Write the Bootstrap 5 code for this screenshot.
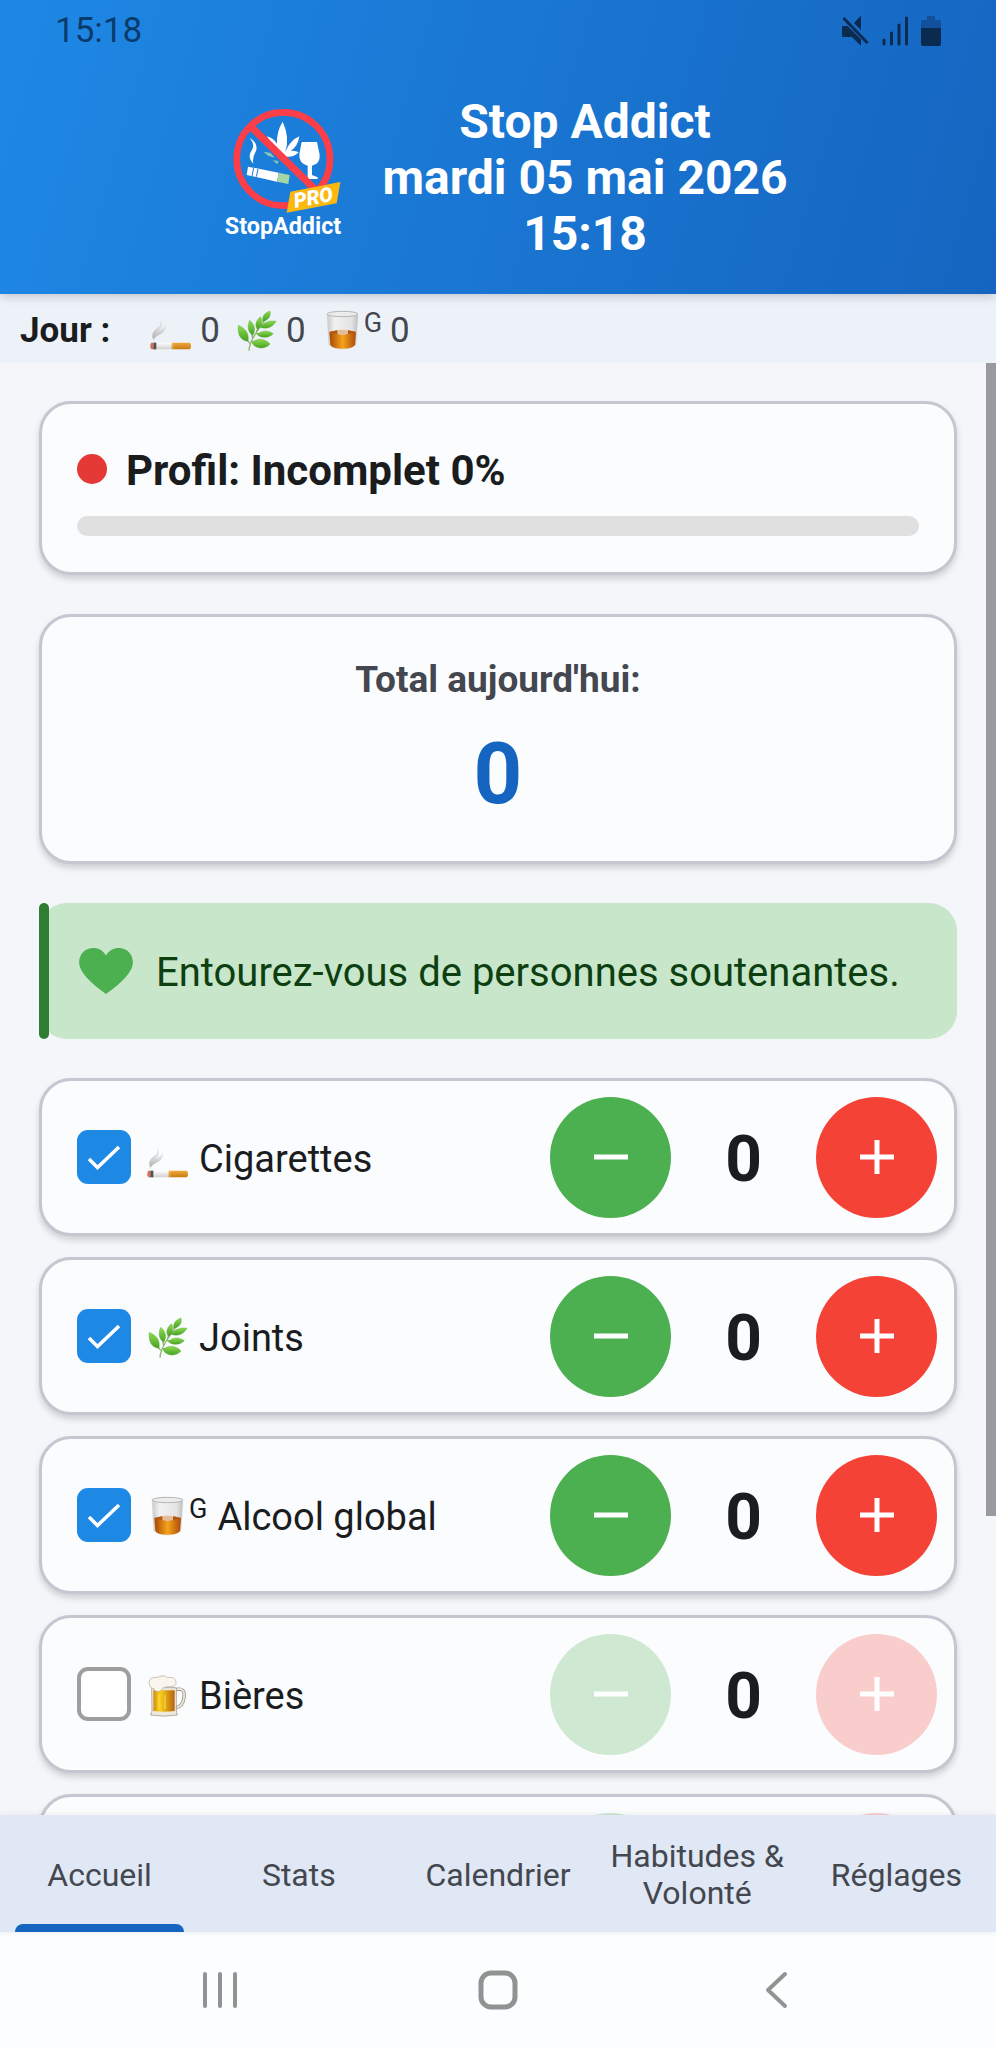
<!DOCTYPE html>
<html lang="fr">
<head>
<meta charset="utf-8">
<meta name="viewport" content="width=device-width, initial-scale=1">
<title>Stop Addict</title>
<link rel="stylesheet" href="https://cdn.jsdelivr.net/npm/bootstrap@5.3.0/dist/css/bootstrap.min.css">
<style>
  body { font-family: Roboto, "Liberation Sans", sans-serif; background: #f4f6fa; color: #1a1c1e; }
  .screen { height: 100vh; }
  .hero { background: linear-gradient(106deg, #1e88e5, #1565c0); color: #fff; padding-bottom: 32px; box-shadow: 0 2px 10px rgba(0,0,0,.2); z-index: 2; }
  .status { height: 62px; padding: 0 55px; color: rgba(0,20,45,.66); font-size: 35px; line-height: 62px; }
  .status-icons { gap: 13px; }
  .hero-title { font-size: 48px; line-height: 56px; font-weight: 700; }
  .day { background: #edf2f9; height: 69px; padding: 4px 20px 0; font-size: 35px; line-height: 40px; color: #44474f; gap: 40px; }
  .day b { color: #1a1c1e; }
  .emoji { width: 42px; height: 42px; flex: none; }
  .mini { font-size: 27px; line-height: 26px; align-self: flex-start; }
  .scroll { padding: 38px 39px 0; gap: 39px; min-height: 0; }
  .thumb { top: 0; right: 0; width: 10px; background: #9a999f; }
  .panel { background: #fafcfe; border: 3px solid #c5c6d0; border-radius: 32px; box-shadow: 0 4px 6px rgba(0,0,0,.16); flex: none; }
  .profile { padding: 40px 35px 36px; }
  .profile-head { gap: 19px; }
  .profile h2 { font-size: 42px; line-height: 46px; padding-top: 4px; font-weight: 700; }
  .dot { width: 30px; height: 30px; background: #e53935; }
  .gauge { height: 20px; border-radius: 10px; background: #e0e0e0; margin-top: 22px; }
  .total { padding: 39px 35px 37px; }
  .total-label { font-size: 37px; line-height: 48px; color: #44474f; font-weight: 700; }
  .total-value { font-size: 85px; line-height: 100px; color: #1565c0; font-weight: 700; margin-top: 20px; }
  .quote { flex: none; height: 136px; background: #c8e6c9; border-radius: 28px; padding-left: 40px; gap: 23px; font-size: 40px; line-height: 48px; color: #0d3f11; }
  .quote-text { padding-top: 4px; }
  .quote-bar { left: 0; top: 0; width: 10px; background: #2e7d32; border-radius: 5px; }
  .counter { height: 158px; padding: 0 17px 0 35px; }
  .counter label { gap: 10px; font-size: 38px; line-height: 46px; padding-top: 4px; }
  .counters { gap: 21px; }
  .counter .form-check-input { width: 54px; height: 54px; margin: 0; border: 4px solid #9e9e9e; border-radius: 11px; flex: none; margin-right: 16px; background-color: #fff; }
  .counter .form-check-input:checked { border-color: #1e88e5; background-color: #1e88e5; background-size: 46px; background-image: url("data:image/svg+xml,%3Csvg xmlns='http://www.w3.org/2000/svg' viewBox='0 0 46 46'%3E%3Cpath d='M8 25l8.500 8.500L38 13' fill='none' stroke='white' stroke-width='3.500'/%3E%3C/svg%3E"); }
  .round { width: 121px; height: 121px; padding: 0; border: 0; border-radius: 50%; display: flex; align-items: center; justify-content: center; }
  .round svg { width: 34px; height: 34px; }
  .minus { background: #4caf50; }
  .plus { background: #f44336; }
  .minus:disabled { background: #cee8d1; }
  .plus:disabled { background: #f9cdcc; }
  .count { width: 145px; font-size: 64px; line-height: 76px; padding-top: 5px; font-weight: 700; }
  .tabs { background: #dfe8f4; height: 117px; z-index: 2; box-shadow: 0 0 6px rgba(0,0,0,.08); }
  .tabs a { flex: 1 1 0; color: #44474f; font-size: 32px; line-height: 37px; padding: 3px 5px 0; }
  .tabs .tab-mark { left: 15px; right: 15px; bottom: 0; height: 8px; border-radius: 8px 8px 0 0; background: #1565c0; }
  .sysnav { background: #fcfdff; height: 116px; padding: 0 81px; }
  .sysnav button { flex: 1 1 0; border: 0; background: none; padding: 0; }
</style>
</head>
<body>
<svg class="position-absolute" width="0" height="0" aria-hidden="true">
  <defs>
    <linearGradient id="gPaper" x1="0" y1="0" x2="0" y2="1"><stop offset="0" stop-color="#fff"/><stop offset="1" stop-color="#cfcfcf"/></linearGradient>
    <linearGradient id="gFilter" x1="0" y1="0" x2="0" y2="1"><stop offset="0" stop-color="#f0a93c"/><stop offset="1" stop-color="#c57a12"/></linearGradient>
    <linearGradient id="gSmoke" x1="0" y1="1" x2="0" y2="0"><stop offset="0" stop-color="#a9a9a9"/><stop offset="1" stop-color="#ececec" stop-opacity=".5"/></linearGradient>
    <linearGradient id="gLeaf" x1="0" y1="0" x2="0" y2="1"><stop offset="0" stop-color="#8fdc50"/><stop offset="1" stop-color="#45a122"/></linearGradient>
    <linearGradient id="gGlass" x1="0" y1="0" x2="1" y2="0"><stop offset="0" stop-color="#c9c9c9"/><stop offset=".25" stop-color="#f1f1f1"/><stop offset=".8" stop-color="#e3e3e3"/><stop offset="1" stop-color="#bdbdbd"/></linearGradient>
    <linearGradient id="gDrink" x1="0" y1="0" x2="1" y2="0"><stop offset="0" stop-color="#a84706"/><stop offset=".5" stop-color="#f6a31c"/><stop offset="1" stop-color="#ad4a08"/></linearGradient>
    <linearGradient id="gBeer" x1="0" y1="0" x2="1" y2="0"><stop offset="0" stop-color="#d08a10"/><stop offset=".3" stop-color="#fbd11f"/><stop offset="1" stop-color="#b8640c"/></linearGradient>
    <symbol id="cig" viewBox="0 0 126 126">
      <path d="M10 92C0 68 14 60 24 52c8-7 8-14 7-26 8 12 7 22 0 31-8 9-20 14-21 35z" fill="url(#gSmoke)"/>
      <path d="M12 88c-2-16 6-22 18-28 10-5 15-10 17-20 3 16-3 26-14 32-9 5-17 7-21 16z" fill="url(#gSmoke)"/>
      <path d="M5 98h62v20H5q-5-10 0-20z" fill="url(#gPaper)"/>
      <path d="M4 98h6v20H4q-7-10 0-20z" fill="#d9705c"/><path d="M10 98h9v20h-9z" fill="#57514b"/>
      <path d="M65 98h55q6 10 0 20H65z" fill="url(#gFilter)"/><path d="M69 98v20" stroke="#f7c77a" stroke-width="2"/>
    </symbol>
    <symbol id="leaf" viewBox="0 0 126 126">
      <path d="M39 122C40 96 58 70 92 22M41 100Q28 86 18 64M49 84Q48 60 44 42M61 65Q70 52 68 38M70 52L105 42M60 70l35 3M46 94l38 9" fill="none" stroke="#8cb566" stroke-width="4"/>
      <g fill="url(#gLeaf)" stroke="#4d9e2c" stroke-width="1">
        <path d="M36 94C10 92 4 68 7 46c20 8 34 24 29 48z"/>
        <path d="M50 76C34 66 34 46 41 31c14 10 20 30 9 45z"/>
        <path d="M64 58C54 44 62 28 74 20c6 14 4 30-10 38z"/>
        <path d="M80 34C78 16 88 8 102 3c4 14-4 28-22 31z"/>
        <path d="M74 52c8-16 28-22 46-18-8 16-28 26-46 18z"/>
        <path d="M64 74c12-14 32-14 48-3-12 12-34 16-48 3z"/>
        <path d="M48 98c14-14 38-14 54 4-14 16-42 18-54-4z"/>
      </g>
    </symbol>
    <symbol id="glass" viewBox="0 0 126 126">
      <path d="M15 11l5 94q42 26 82 0l6-94z" fill="url(#gGlass)" stroke="#d2d2d2" stroke-width="1"/>
      <ellipse cx="61.500" cy="12" rx="46" ry="8" fill="#ececec" stroke="#b5b5b5" stroke-width="3"/>
      <path d="M22 66q40-12 80 0l-3 38q-6 12-38 12t-36-12z" fill="url(#gDrink)"/>
      <path d="M22 66q40-12 80 0-40 16-80 0z" fill="#b5590e"/>
      <path d="M46 60q16-8 32 0v12q-16 6-32 0z" fill="#f3dfc8" opacity=".75"/>
    </symbol>
    <symbol id="beer" viewBox="0 0 126 126">
      <path d="M84 45c22-8 30 2 27 22-2 22-12 30-27 32" fill="none" stroke="#8f8579" stroke-width="10"/>
      <path d="M84 45c22-8 30 2 27 22-2 22-12 30-27 32" fill="none" stroke="#e8e3da" stroke-width="6"/>
      <path d="M14 38h74v70l3 12q-40 7-80 0l4-12z" fill="#eee9df" stroke="#958a7c" stroke-width="2"/>
      <path d="M19 46h64v62q-32 5-64 0z" fill="url(#gBeer)"/>
      <path d="M35 60v42M54 60v42" stroke="#ffe04a" stroke-width="6" opacity=".5"/>
      <path d="M7 26C3 12 18 4 30 8c10-7 26-7 32 0 14-4 26 4 25 16 0 8-8 11-20 11-10 0-22 2-26 12-6 4-16 4-20-6C12 40 8 34 7 26z" fill="#faf6ee" stroke="#b0a594" stroke-width="2"/>
    </symbol>
    <symbol id="less" viewBox="0 0 34 34"><path d="M0 17h34" stroke="#fff" stroke-width="5"/></symbol>
    <symbol id="more" viewBox="0 0 34 34"><path d="M0 17h34M17 0v34" stroke="#fff" stroke-width="5"/></symbol>
  </defs>
</svg>

<div class="screen d-flex flex-column overflow-hidden">
  <header class="hero position-relative">
    <div class="status d-flex justify-content-between align-items-center">
      <span>15:18</span>
      <span class="status-icons d-flex align-items-center">
        <svg width="27" height="30" viewBox="0 0 27 30" fill="#0a2a4f"><path d="M0 10h5.500L19 23.500V29h-1l-8-8H1q-1 0-1-1zM12 7l6.500-7H19v14z"/><path d="M1.500 2L25.500 27" stroke="#0a2a4f" stroke-width="3"/></svg>
        <svg width="26" height="30" viewBox="0 0 26 30" stroke="#0a2a4f" stroke-width="3" stroke-linecap="round"><path d="M2 24v4M9.500 17v11M17 9v19M24.500 2v26" fill="none"/></svg>
        <svg width="20" height="30" viewBox="0 0 20 30"><path d="M6 0h8v4h4q2 0 2 2v7H0V6q0-2 2-2h4z" fill="#12509c"/><path d="M0 12h20v16q0 2-2 2H2q-2 0-2-2z" fill="#0a2a4f"/></svg>
      </span>
    </div>
    <div class="d-flex justify-content-center align-items-center pt-4 mt-2 gap-4">
      <svg width="150" height="166" viewBox="0 0 450 498" role="img" aria-label="StopAddict Pro">
        <g fill="#fff">
          <path d="M224 80q22 48 8 90 14-34 42-46-4 30-26 44 14-2 24 4-18 18-44 12l-42-40q-2-8-9-20 20 6 30 22-2-36 17-66z"/>
          <path d="M281 141h46l8 38q2 28-23 33v28l17 7v5h-30V212q-27-6-25-34z"/>
          <path d="M124 128q28 16 20 40-12 20-8 38-20-20-4-42 10-16-8-36z"/>
          <path d="M120 215l92 18-5 27-91-20z"/>
        </g>
        <path d="M137 219l-5 24M150 222l-5 23" stroke="#1c7cd9" stroke-width="3"/>
        <path d="M212 233l33 7-4 27-34-7z" fill="#a5d6a7"/>
        <path d="M166 170l22 4 12 14-20-6zM194 196l18 2-4 10z" fill="#8bc3b4"/>
        <circle cx="226" cy="192" r="140" fill="none" stroke="#fb3e48" stroke-width="20"/>
        <path d="M128 94L326 288" stroke="#fb3e48" stroke-width="22"/>
        <path d="M247 290l150-29-11 64-150 28z" fill="#fbb90f"/>
        <text x="316" y="328" transform="rotate(-11 318 307)" text-anchor="middle" font-size="61" font-weight="900" font-style="italic" fill="#fff">PRO</text>
        <text x="225" y="418" text-anchor="middle" font-size="70" font-weight="700" fill="#fff">StopAddict</text>
      </svg>
      <h1 class="hero-title text-center mb-0">Stop Addict<br>mardi 05 mai 2026<br>15:18</h1>
    </div>
  </header>

  <div class="day d-flex align-items-center flex-shrink-0">
    <b>Jour :</b>
    <div class="d-flex align-items-center gap-3">
      <span class="d-flex align-items-center gap-2"><svg class="emoji"><use href="#cig"/></svg>0</span>
      <span class="d-flex align-items-center gap-2"><svg class="emoji"><use href="#leaf"/></svg>0</span>
      <span class="d-flex align-items-center gap-2"><span class="d-flex"><svg class="emoji"><use href="#glass"/></svg><span class="mini">G</span></span>0</span>
    </div>
  </div>

  <main class="scroll position-relative overflow-hidden flex-grow-1 d-flex flex-column">
    <section class="panel profile">
      <div class="profile-head d-flex align-items-center">
        <span class="dot rounded-circle"></span>
        <h2 class="mb-0">Profil: Incomplet 0%</h2>
      </div>
      <div class="gauge" role="progressbar" aria-label="Profil" aria-valuenow="0" aria-valuemin="0" aria-valuemax="100"></div>
    </section>

    <section class="panel total text-center">
      <div class="total-label">Total aujourd'hui:</div>
      <div class="total-value">0</div>
    </section>

    <section class="quote position-relative d-flex align-items-center">
      <span class="quote-bar position-absolute h-100"></span>
      <svg width="54" height="46" viewBox="0 0 160 137" aria-hidden="true"><path d="M80 137Q0 80 0 43C0-5 60-14 80 22c20-36 80-27 80 21q0 37-80 94z" fill="#4caf50"/></svg>
      <span class="quote-text">Entourez-vous de personnes soutenantes.</span>
    </section>

    <div class="counters d-flex flex-column">
      <section class="panel counter d-flex align-items-center">
        <input class="form-check-input" type="checkbox" id="c1" checked>
        <label for="c1" class="d-flex align-items-center me-auto"><svg class="emoji"><use href="#cig"/></svg>Cigarettes</label>
        <button class="round minus" aria-label="Moins"><svg><use href="#less"/></svg></button>
        <span class="count text-center">0</span>
        <button class="round plus" aria-label="Plus"><svg><use href="#more"/></svg></button>
      </section>
      <section class="panel counter d-flex align-items-center">
        <input class="form-check-input" type="checkbox" id="c2" checked>
        <label for="c2" class="d-flex align-items-center me-auto"><svg class="emoji"><use href="#leaf"/></svg>Joints</label>
        <button class="round minus" aria-label="Moins"><svg><use href="#less"/></svg></button>
        <span class="count text-center">0</span>
        <button class="round plus" aria-label="Plus"><svg><use href="#more"/></svg></button>
      </section>
      <section class="panel counter d-flex align-items-center">
        <input class="form-check-input" type="checkbox" id="c3" checked>
        <label for="c3" class="d-flex align-items-center me-auto"><span class="d-flex"><svg class="emoji"><use href="#glass"/></svg><span class="mini">G</span></span>Alcool global</label>
        <button class="round minus" aria-label="Moins"><svg><use href="#less"/></svg></button>
        <span class="count text-center">0</span>
        <button class="round plus" aria-label="Plus"><svg><use href="#more"/></svg></button>
      </section>
      <section class="panel counter d-flex align-items-center">
        <input class="form-check-input" type="checkbox" id="c4">
        <label for="c4" class="d-flex align-items-center me-auto"><svg class="emoji"><use href="#beer"/></svg>Bières</label>
        <button class="round minus" aria-label="Moins" disabled><svg><use href="#less"/></svg></button>
        <span class="count text-center">0</span>
        <button class="round plus" aria-label="Plus" disabled><svg><use href="#more"/></svg></button>
      </section>
      <section class="panel counter d-flex align-items-center justify-content-end">
        <button class="round minus" aria-label="Moins" disabled></button>
        <span class="count"></span>
        <button class="round plus" aria-label="Plus" disabled></button>
      </section>
    </div>
    <span class="thumb position-absolute" style="height:79.4%"></span>
  </main>

  <nav class="tabs d-flex flex-shrink-0 position-relative">
    <a href="#" class="position-relative d-flex align-items-center justify-content-center text-center text-decoration-none" aria-current="page">Accueil<span class="tab-mark position-absolute"></span></a>
    <a href="#" class="d-flex align-items-center justify-content-center text-center text-decoration-none">Stats</a>
    <a href="#" class="d-flex align-items-center justify-content-center text-center text-decoration-none">Calendrier</a>
    <a href="#" class="d-flex align-items-center justify-content-center text-center text-decoration-none">Habitudes &amp; Volonté</a>
    <a href="#" class="d-flex align-items-center justify-content-center text-center text-decoration-none">Réglages</a>
  </nav>

  <div class="sysnav d-flex flex-shrink-0 align-items-center">
    <button aria-label="Applications récentes"><svg width="36" height="38" viewBox="0 0 36 38"><path d="M3 3v32M18 3v32M33 3v32" stroke="#909392" stroke-width="4" stroke-linecap="round"/></svg></button>
    <button aria-label="Accueil système"><svg width="40" height="40" viewBox="0 0 40 40"><rect x="3" y="3" width="34" height="34" rx="10" fill="none" stroke="#909392" stroke-width="5"/></svg></button>
    <button aria-label="Retour"><svg width="24" height="38" viewBox="0 0 24 38"><path d="M21 3L4 19l17 16" fill="none" stroke="#909392" stroke-width="4" stroke-linecap="round" stroke-linejoin="round"/></svg></button>
  </div>
</div>
<script src="https://cdn.jsdelivr.net/npm/bootstrap@5.3.0/dist/js/bootstrap.bundle.min.js"></script>
</body>
</html>
